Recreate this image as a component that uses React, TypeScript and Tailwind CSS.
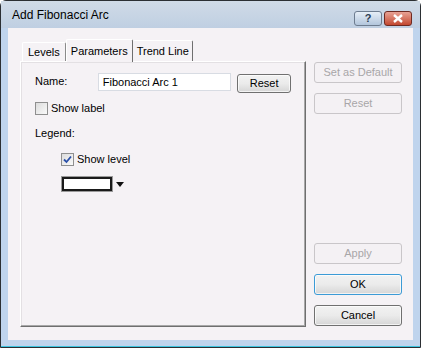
import React from 'react';

const font = { fontFamily: '"Liberation Sans", Arial, sans-serif' };

const Btn: React.FC<{ label: string; disabled?: boolean; focused?: boolean; className?: string }> = ({
  label,
  disabled,
  focused,
  className = '',
}) => {
  if (disabled) {
    return (
      <div
        className={`flex h-[21px] items-center justify-center rounded-[3px] border border-[#c9c6c9] bg-[#f4f1f4] text-[11px] text-[#a8a6a8] ${className}`}
      >
        {label}
      </div>
    );
  }
  return (
    <div
      className={`flex h-[21px] items-center justify-center rounded-[3px] border ${
        focused ? 'border-[#3c9bd6]' : 'border-[#707070]'
      } bg-gradient-to-b from-[#f2f2f2] via-[#ebebeb] to-[#d6d6d6] text-[11px] text-black shadow-[inset_0_0_0_1px_rgba(255,255,255,0.7)] ${className}`}
    >
      {label}
    </div>
  );
};

const Check: React.FC<{ checked?: boolean }> = ({ checked }) => (
  <div className="flex h-[13px] w-[13px] items-center justify-center border border-[#8f8f8f] bg-gradient-to-br from-[#dcdcdc] to-[#fafafa]">
    {checked && (
      <svg width="9" height="9" viewBox="0 0 9 9">
        <path d="M1 4.5 L3.5 7 L8 1.5" fill="none" stroke="#2a4fa8" strokeWidth="1.8" />
      </svg>
    )}
  </div>
);

const App: React.FC = () => {
  return (
    <div className="h-[348px] w-[421px] bg-white" style={font}>
      <div className="flex h-full w-full flex-col rounded-t-[6px] border border-[#2b2f33] bg-[#bfd4ed]">
        {/* Title bar */}
        <div className="flex h-[27px] items-center bg-gradient-to-b from-[#d0dbe7] to-[#bfcfe2] pl-[11px] pr-[8px]">
          <span className="text-[12px] text-black">Add Fibonacci Arc</span>
          <div className="ml-auto mt-[8px] flex gap-[2px]">
            <div className="flex h-[15px] w-[28px] items-center justify-center rounded-[3px] border border-[#6d7c8f] bg-gradient-to-b from-[#e6eef7] to-[#b3c6dc] text-[11px] font-bold text-[#2c3e55]">
              ?
            </div>
            <div className="flex h-[15px] w-[28px] items-center justify-center rounded-[3px] border border-[#6e2a22] bg-gradient-to-b from-[#e8a295] to-[#c2472f]">
              <svg width="12" height="9" viewBox="0 0 12 9">
                <path d="M2 1 L10 8 M10 1 L2 8" stroke="white" strokeWidth="2.4" />
              </svg>
            </div>
          </div>
        </div>

        {/* Client area */}
        <div className="mx-[7px] flex flex-1 bg-[#f5f2f5] pb-[13px] pl-[12px] pr-[11px] pt-[10px]">
          {/* Left: tabs + panel */}
          <div className="flex w-[286px] flex-col">
            <div className="flex h-[23px] items-end pl-[2px]">
              <div className="flex h-[19px] items-center rounded-t-[2px] border-l border-t border-r border-[#ffffff] border-r-[#8a8a8a] bg-[#f5f2f5] px-[5px] text-[11px]">
                Levels
              </div>
              <div className="relative z-10 -mb-[1px] flex h-[23px] items-start rounded-t-[2px] border-l border-t border-r border-[#ffffff] border-r-[#6f6f6f] bg-[#f5f2f5] px-[4px] pt-[3px] text-[11px]">
                Parameters
              </div>
              <div className="flex h-[21px] items-center rounded-t-[2px] border-t border-r border-[#ffffff] border-r-[#6f6f6f] bg-[#f5f2f5] pl-[4px] pr-[3px] text-[11px]">
                Trend Line
              </div>
            </div>
            <div className="flex-1 border border-[#ffffff] border-b-[#6f6f6f] border-r-[#6f6f6f] shadow-[inset_-1px_-1px_0_#a8a8a8,inset_1px_1px_0_#e3e0e3] px-[14px] pt-[11px] text-[11px] leading-[13px] text-black">
              <div className="flex h-[18px] items-center">
                <span className="w-[63px] -translate-y-[1px]">Name:</span>
                <div className="flex h-[18px] w-[134px] items-center border border-[#d8dce3] bg-white pl-[4px]">
                  Fibonacci Arc 1
                </div>
                <Btn label="Reset" className="ml-[6px] mt-[2px] w-[54px] !h-[19px]" />
              </div>
              <div className="mt-[11px] flex h-[13px] items-center gap-[3px]">
                <Check />
                <span>Show label</span>
              </div>
              <div className="mt-[12px]">Legend:</div>
              <div className="ml-[26px] mt-[13px] flex h-[13px] items-center gap-[3px]">
                <Check checked />
                <span>Show level</span>
              </div>
              <div className="ml-[27px] mt-[10px] flex h-[16px] w-[66px] items-center">
                <div className="h-[14px] w-[50px] border-2 border-[#1a1a1a] bg-white shadow-[0_0_0_1px_#9a9a9a]" />
                <svg width="14" height="14" viewBox="0 0 14 14" className="ml-[1px]">
                  <path d="M3 5 L11 5 L7 10 Z" fill="#111" />
                </svg>
              </div>
            </div>
          </div>

          {/* Right: buttons */}
          <div className="ml-[8px] flex flex-1 flex-col pb-[1px] pt-[24px]">
            <Btn label="Set as Default" disabled />
            <Btn label="Reset" disabled className="mt-[10px]" />
            <div className="flex-1" />
            <Btn label="Apply" disabled />
            <Btn label="OK" focused className="mt-[10px]" />
            <Btn label="Cancel" className="mt-[10px]" />
          </div>
        </div>
        <div className="h-[6px]" />
        <div className="h-[1px] bg-[#3cc4df]" />
      </div>
    </div>
  );
};

export default App;
